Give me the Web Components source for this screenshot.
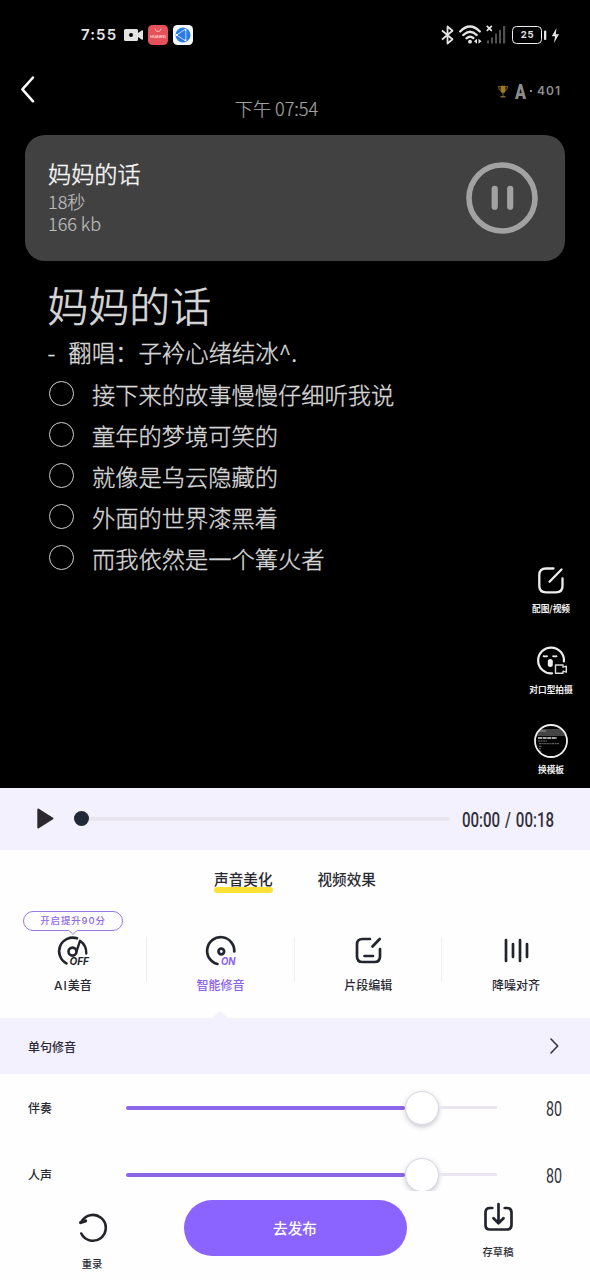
<!DOCTYPE html>
<html lang="zh-CN">
<head>
<meta charset="utf-8">
<title>妈妈的话</title>
<style>
  html, body { margin: 0; padding: 0; background: #fefefe; }
  body { width: 590px; height: 1280px; overflow: hidden; font-family: "Noto Sans CJK SC", "Noto Sans", sans-serif; }
</style>
</head>
<body>
<song-editor></song-editor>
<script>
const define = (name, css, html) => {
  const t = document.createElement('template');
  t.innerHTML = `<style>*{box-sizing:border-box} svg{display:block;flex:none;overflow:visible}${css}</style>${html}`;
  customElements.define(name, class extends HTMLElement {
    constructor() {
      super();
      this.attachShadow({ mode: 'open' }).appendChild(t.content.cloneNode(true));
    }
  });
};

/* condensed numerals: the text is squeezed to the given width */
customElements.define('narrow-text', class extends HTMLElement {
  connectedCallback() {
    const w = this.getAttribute('w'), h = this.getAttribute('h'), s = this.getAttribute('size');
    const wt = this.getAttribute('weight') || 500;
    this.attachShadow({ mode: 'open' }).innerHTML =
      `<style>:host{display:block;flex:none;width:${w}px;height:${h}px}svg{display:block;overflow:visible}
       text{font-family:Roboto,"Liberation Sans",sans-serif;font-size:${s}px;font-weight:${wt};fill:currentColor;word-spacing:1.5px}</style>
       <svg width="${w}" height="${h}"><text x="0" y="${h}" textLength="${w}" lengthAdjust="spacingAndGlyphs">${this.getAttribute('text')}</text></svg>`;
  }
});

define('status-bar', `
  :host{display:flex;align-items:center;height:69px;padding:0 30px 0 81px;color:#e4e4e4}
  .time{font:600 15px/20px Inter,sans-serif;letter-spacing:1.1px;width:43px}
  .cam{margin-right:5px}.red{margin-right:5px}
  .sp{flex:1}
  .bat{width:30px;height:18px;border:1.6px solid #eee;border-radius:4.5px;font:700 9.5px/15px Inter,sans-serif;letter-spacing:.7px;text-align:center;padding-left:1px}
`, `
  <span class="time">7:55</span>
  <svg class="cam" width="19" height="12" viewBox="0 0 19 12"><path fill="#e4e4e4" fill-rule="evenodd" d="M1.5 0h11a1.5 1.5 0 0 1 1.5 1.5V4l3.600-2.600Q19 .8 19 2v8q0 1.200-1.400.6L14 8v2.500a1.500 1.500 0 0 1-1.500 1.500h-11A1.500 1.500 0 0 1 0 10.500v-9A1.500 1.500 0 0 1 1.500 0zM7 4a2 2 0 1 0 0 4a2 2 0 0 0 0-4z"/></svg>
  <svg class="red" width="20" height="20" viewBox="0 0 20 20"><rect width="20" height="20" rx="4.500" fill="#e6525a"/><path d="M7 3.500q.3 3 3 3t3-3" fill="none" stroke="#ffb8b4" stroke-width="1"/><text x="2.300" y="13" textLength="15.500" lengthAdjust="spacingAndGlyphs" font-family="Inter,sans-serif" font-size="4" font-weight="700" fill="#ffd4d0">HUAWEI</text></svg>
  <svg width="20" height="20" viewBox="0 0 20 20"><rect width="20" height="20" rx="4.500" fill="#f5f9ff"/><circle cx="10" cy="10" r="7.500" fill="#2d7ae6"/><path d="M3.500 10L11.800 4.500M3.500 10L12 15.500M12.800 5v9.500" fill="none" stroke="#dcecff" stroke-width=".8"/><circle cx="12.500" cy="4.800" r="1" fill="#fff"/><circle cx="12.500" cy="15.200" r="1" fill="#fff"/><circle cx="3.800" cy="10" r="1" fill="#fff"/></svg>
  <span class="sp"></span>
  <svg width="13" height="20" viewBox="0 0 13 20" style="margin-right:5px"><path d="M1 5.500L11.500 14.200L6.500 18.500V1.500L11.500 5.800L1 14.500" fill="none" stroke="#e4e4e4" stroke-width="1.800" stroke-linejoin="round"/></svg>
  <svg width="23" height="19" viewBox="0 0 23 19" style="margin-right:4px"><g fill="none" stroke="#e4e4e4" stroke-width="2.400" stroke-linecap="round"><path d="M1.200 6.500Q11 -3.500 20.800 6.500"/><path d="M4.300 10Q11 3.500 17.700 10"/><path d="M7.500 13.300Q11 10.300 14.300 13"/></g><circle cx="11" cy="16.700" r="1.900" fill="#e4e4e4"/><path d="M15 16.300l3-2.500v5zM22.500 16.300l-3-2.500v5z" fill="#e4e4e4"/></svg>
  <svg width="20" height="19" viewBox="0 0 20 19" style="margin-right:6px"><path d="M.8 .8l5 5M5.800 .8l-5 5" stroke="#e4e4e4" stroke-width="1.700"/><g fill="#505050"><rect x="1" y="15.500" width="2" height="3"/><rect x="5" y="12.500" width="2" height="6"/><rect x="9" y="8.500" width="2" height="10"/><rect x="13" y="5" width="2" height="13.500"/><rect x="17" y="1" width="2.200" height="17.500"/></g></svg>
  <span class="bat">25</span>
  <svg width="18" height="18" viewBox="0 0 18 18"><rect x="2" y="4.500" width="2.300" height="9.500" rx="1" fill="#e4e4e4"/><path d="M14.500 2L9.800 10.300H13L12 17L17 8.300H13.800z" fill="#e4e4e4"/></svg>
`);

define('top-nav', `
  :host{display:flex;align-items:flex-start;height:66px;padding:0 28px 0 21px}
  .date{width:260px;margin-left:111.500px;text-align:center;font-weight:300;-webkit-text-stroke:.2px;font-size:18.100px;line-height:26px;padding-top:26px;color:#a2a2a2}
  .back{margin-top:7px}
  .rank{display:flex;align-items:center;height:18px;margin:13px 0 0 auto;color:#8d8d8d;font:600 12px/18px Inter,sans-serif}
  .num{letter-spacing:1.1px;margin-left:3px;width:25px}
  .dot{width:2px;height:2px;background:#8d8d8d;margin:0 2px 0 4px}
`, `
  <svg class="back" width="14" height="27" viewBox="0 0 14 27"><path d="M12 1.500L1.400 13.300L12 25.300" fill="none" stroke="#fff" stroke-width="2.500" stroke-linecap="round" stroke-linejoin="round"/></svg>
  <span class="date">下午 07:54</span>
  <span class="rank">
    <svg width="10" height="13" viewBox="0 0 10 13"><path d="M2.500 .8h5v4.500q0 2.700-2.500 2.700t-2.500-2.700z" fill="#a07822"/><path d="M2.300 1.500H.5q0 4 2.500 4.200M7.700 1.500h1.800q0 4-2.500 4.200M5 8v3" fill="none" stroke="#80601d" stroke-width="1"/><path d="M2.500 11h5v1.500h-5z" fill="#7e6430"/></svg>
    <narrow-text w="11" h="15" size="21" weight="900" text="A" style="margin-left:7px;margin-bottom:-1px"></narrow-text>
    <span class="dot"></span><span class="num">401</span>
  </span>
`);

define('audio-card', `
  :host{display:flex;align-items:center;justify-content:space-between;height:126px;margin:0 25px 0 25px;padding:0 27px 0 23px;border-radius:20px;background:#414141;color:#bdbdbd;font-weight:300}
  div{padding-bottom:3px}
  h2{font-size:23.2px;line-height:28px;font-weight:300;-webkit-text-stroke:.45px;color:#f5f5f5;margin:0 0 3px}
  p{font-size:18px;line-height:22px;margin:0;white-space:pre-line;-webkit-text-stroke:.2px}
`, `
  <div><h2><slot name="title"></slot></h2><p><slot name="meta"></slot></p></div>
  <svg width="72" height="72" viewBox="0 0 72 72"><circle cx="36" cy="36" r="33" fill="none" stroke="#a2a2a2" stroke-width="5.600"/><path d="M28.700 26.800v17.900M44.200 26.800v17.900" stroke="#a2a2a2" stroke-width="6.200" stroke-linecap="round"/></svg>
`);

define('check-line', `
  :host{display:flex;height:41px;align-items:center;color:#d6d6d6;font-size:23.25px;font-weight:300;line-height:39px;white-space:nowrap}
  i{width:25px;height:25px;border:1.400px solid #cfcfcf;border-radius:50%;margin:0 18.500px 5px 1px}
  span{height:41px}
`, `<i></i><span><slot></slot></span>`);

define('note-body', `
  :host{display:block;padding:16px 48px 0 47.500px;color:#d8d8d8;font-weight:300;-webkit-text-stroke:.35px}
  h1{font-size:40.9px;line-height:56px;font-weight:300;margin:0;-webkit-text-stroke:.6px}
  .sub{font-size:23.400px;line-height:38px;height:42px;white-space:pre}
  .sub span{margin-left:13px}
`, `
  <h1>妈妈的话</h1>
  <div class="sub">-<span>翻唱：子衿心绪结冰^.</span></div>
  <check-line>接下来的故事慢慢仔细听我说</check-line>
  <check-line>童年的梦境可笑的</check-line>
  <check-line>就像是乌云隐藏的</check-line>
  <check-line>外面的世界漆黑着</check-line>
  <check-line>而我依然是一个篝火者</check-line>
`);

define('rail-item', `
  :host{display:flex;flex-direction:column;align-items:center;height:80.5px;color:#f0f0f0}
  .ic{height:36px;display:flex;align-items:center}
  .lb{font-size:8.700px;font-weight:700;line-height:14px;margin-top:4px;white-space:nowrap}
`, `<div class="ic"><slot name="icon"></slot></div><div class="lb"><slot></slot></div>`);

define('side-rail', `
  :host{position:absolute;right:9px;top:562px;width:60px;display:block}
`, `
  <rail-item><svg slot="icon" width="26" height="27" viewBox="0 0 26 27"><path d="M15.500 1.500H8Q1.300 1.500 1.300 8v11q0 6.300 6.700 6.300h10q6.500 0 6.500-6.300V11.500M11.500 14.800L23.500 2.500" fill="none" stroke="#eee" stroke-width="2.300" stroke-linecap="round"/></svg>配图/视频</rail-item>
  <rail-item><svg slot="icon" width="28" height="29" viewBox="0 0 28 29"><path d="M15 27.300A12.900 12.900 0 1 1 26.900 15.500" fill="none" stroke="#eee" stroke-width="2.200" stroke-linecap="round"/><path d="M6 9.700q2.300 1.500 4.600 0M15.500 9.700q2.300 1.500 4.600 0" fill="none" stroke="#eee" stroke-width="1.800"/><rect x="10.800" y="13" width="5" height="8" rx="2.500" fill="#eee"/><path d="M18.500 19h7.500v2.200l3.300-1v6l-3.300-1v2H18.500z" fill="#000" stroke="#ddd" stroke-width="1.400" stroke-linejoin="round"/></svg>对口型拍摄</rail-item>
  <rail-item><svg slot="icon" width="34" height="34" viewBox="0 0 34 34"><defs><clipPath id="c"><circle cx="17" cy="17" r="15.500"/></clipPath></defs><g clip-path="url(#c)"><path d="M0 5h34v7H0z" fill="#444"/><path d="M4 7h8" stroke="#999"/><path d="M4 14h19" stroke="#ddd" stroke-width="1.600" stroke-dasharray="4 .6"/><path d="M4 17h9M5 19.700h20M5 22.300h3M5 24.800h2M5 27.300h3" stroke="#777" stroke-width="1" stroke-dasharray="2 .6"/></g><circle cx="17" cy="17" r="16" fill="none" stroke="#eee" stroke-width="1.800"/></svg>换模板</rail-item>
`);

define('note-screen', `
  :host{display:block;position:relative;height:788px;background:#000;overflow:hidden}
`, `
  <status-bar></status-bar><top-nav></top-nav>
  <audio-card><span slot="title">妈妈的话</span><span slot="meta">18秒
166 kb</span></audio-card>
  <note-body></note-body>
  <side-rail></side-rail>
`);

define('player-bar', `
  :host{display:flex;align-items:center;height:61.500px;padding:0 36px 0 37px;background:#f4f1fe;color:#30303a}
  .tr{flex:1;display:flex;align-items:center;margin:0 12px 0 20px}
  .dot{width:15px;height:15px;border-radius:50%;background:#202938}
  .ln{flex:1;height:3.500px;background:#e8e5f1;border-radius:0 2px 2px 0}
`, `
  <svg width="17" height="21" viewBox="0 0 17 21"><path d="M1.300 1.500L15.500 10.500L1.300 19.500z" fill="#2d2930" stroke="#2d2930" stroke-width="2" stroke-linejoin="round"/></svg>
  <div class="tr"><span class="dot"></span><span class="ln"></span></div>
  <narrow-text w="92" h="14" size="19.300" text="00:00 / 00:18" style="margin-top:3px"></narrow-text>
`);

define('tab-row', `
  :host{display:flex;justify-content:center;gap:45px;height:59.500px;padding-top:18px;font-size:14.600px;font-weight:500;line-height:22px;color:#292933}
  span{height:24px;white-space:nowrap;position:relative;z-index:0}
  .on::after{content:"";position:absolute;z-index:-1;left:0;right:0;top:19px;height:6px;border-radius:3px;background:#fce137}
`, `<span class="on">声音美化</span><span>视频效果</span>`);

define('tool-item', `
  :host{display:flex;flex-direction:column;align-items:center;flex:1;position:relative;color:#292933;font-size:12px;font-weight:500;line-height:18px;padding-top:26px}
  :host([active]){color:#8a62ee}
  :host(:not(:last-child))::after{content:"";position:absolute;right:0;top:28px;width:1px;height:45px;background:#f0edf7}
  :host([active])::before{content:"";position:absolute;left:50%;bottom:0;margin-left:-8.500px;border:8.500px solid transparent;border-bottom:7.500px solid #f4f1fe;border-top:0}
  .ic{height:31px;display:flex;align-items:center;margin-bottom:10px}
`, `<div class="ic"><slot name="icon"></slot></div><div><slot></slot></div><slot name="tip"></slot>`);

define('tip-bubble', `
  :host{position:absolute;left:24px;top:2px;width:100px;height:20px;border:1px solid #9a79e6;border-radius:11px;background:#fefefe;color:#8f6ce8;font-family:Inter,"Noto Sans CJK SC",sans-serif;font-size:9.500px;font-weight:500;line-height:18px;letter-spacing:.850px;text-align:center;white-space:nowrap}
  svg{position:absolute;left:44px;top:18px}
`, `<slot></slot><svg width="10" height="6" viewBox="0 0 10 6"><path d="M.5 -.5h9V.3L5 4.500L.5 .3z" fill="#fefefe"/><path d="M1 .5L5 4.500L9 .5" fill="none" stroke="#9a79e6"/></svg>`);

define('tool-row', `:host{display:flex;height:109px;margin-left:-1px}
  .it{font:italic 700 10.500px Inter,sans-serif}
  .la{font-family:Inter,sans-serif;letter-spacing:.9px}`, `
  <tool-item><svg slot="icon" width="30" height="30" viewBox="0 0 30 30"><g fill="none" stroke="#22252d" stroke-width="2.600" stroke-linecap="round" stroke-linejoin="round"><path d="M8.500 27.300A13.600 13.600 0 0 1 19 2.300"/><circle cx="14.500" cy="15.600" r="4"/><path d="M18.500 15.500L22 4.800Q28.600 9.500 28.300 17.500" stroke-width="2.400"/></g><text class="it" x="11.500" y="29" textLength="19.500" lengthAdjust="spacingAndGlyphs" fill="#22252d">OFF</text></svg><span class="la">AI</span>美音<tip-bubble slot="tip">开启提升90分</tip-bubble></tool-item>
  <tool-item active><svg slot="icon" width="30" height="30" viewBox="0 0 30 30"><g fill="none" stroke="#22252d" stroke-width="2.700" stroke-linecap="round"><path d="M11.500 28A13.600 13.600 0 1 1 28.300 15.500"/><circle cx="15.300" cy="15.500" r="2.800"/></g><text class="it" x="15" y="29" textLength="14.500" lengthAdjust="spacingAndGlyphs" fill="#8a62ee">ON</text></svg>智能修音</tool-item>
  <tool-item><svg slot="icon" width="27" height="27" viewBox="0 0 27 27"><path d="M15 2H7.500Q2 2 2 7.500v12Q2 25 7.500 25h12q5.500 0 5.500-5.500V12M17.500 9.500L24.700 2M9.500 19h8.500" fill="none" stroke="#22252d" stroke-width="2.700" stroke-linecap="round"/></svg>片段编辑</tool-item>
  <tool-item><svg slot="icon" width="25" height="25" viewBox="0 0 25 25"><path d="M2 2v21M9 6v13M16 2v21M23 6v13" stroke="#22252d" stroke-width="2.700" stroke-linecap="round"/></svg>降噪对齐</tool-item>
`);

define('link-row', `
  :host{display:flex;align-items:center;justify-content:space-between;height:56px;padding:0 31px 0 28px;background:#f4f1fe;color:#292933;font-size:12px;font-weight:500}
`, `<span><slot></slot></span><svg width="9" height="16" viewBox="0 0 9 16"><path d="M1 1L7.700 8L1 15" fill="none" stroke="#35353f" stroke-width="1.600" stroke-linecap="round" stroke-linejoin="round"/></svg>`);

define('volume-row', `
  :host{display:flex;align-items:center;height:67px;padding:0 28px;color:#292933;font-size:12px;font-weight:500}
  .lb{width:98px}
  .tr{width:371px;display:flex;align-items:center}
  .a{width:279px;height:4px;border-radius:2px;background:#8b66e6}
  .k{width:34px;height:34px;border-radius:50%;background:#fff;border:1px solid #dad7e2;box-shadow:0 2px 5px rgba(50,40,70,.25)}
  .b{flex:1;height:2.500px;background:#e9e5f1}
  narrow-text{margin:2px 0 0 auto;color:#33333d}
`, `<span class="lb"><slot></slot></span><div class="tr"><span class="a"></span><span class="k"></span><span class="b"></span></div><narrow-text w="16" h="14" size="19.300" weight="400" text="80"></narrow-text>`);

define('volume-panel', `:host{display:block;height:117px;overflow:hidden}`,
  `<volume-row>伴奏</volume-row><volume-row>人声</volume-row>`);

define('bottom-bar', `
  :host{display:flex;height:89px;padding-left:61px;color:#292933;font-size:10.300px;font-weight:500;line-height:16px}
  .s{width:62px;display:flex;flex-direction:column;align-items:center;white-space:nowrap}
  button{font:500 14.600px/55px "Noto Sans CJK SC",sans-serif;color:#fff;width:223px;height:55.500px;border:0;border-radius:28px;background:#8b63ff;padding:0;margin:9px 60.500px 0}
`, `
  <div class="s" style="padding-top:22px"><svg width="28" height="30" viewBox="0 0 28 30" style="margin-left:2px"><path d="M2.300 9.200A12.900 12.900 0 1 1 2.300 20.500" fill="none" stroke="#26242a" stroke-width="2.600" stroke-linecap="round"/><path d="M1.600 9.500L6.600 8" fill="none" stroke="#26242a" stroke-width="3.200" stroke-linecap="round"/></svg><span style="margin-top:12.500px">重录</span></div>
  <button>去发布</button>
  <div class="s" style="padding-top:10.500px"><svg width="29" height="29" viewBox="0 0 29 29"><path d="M8.300 6H6Q1.500 6 1.500 10.500V23q0 4.500 4.500 4.500h17q4.500 0 4.500-4.500V10.500Q27.500 6 23 6h-2.300M14.500 2V19M9.500 16.300L14.500 21.300L19.500 16.300" fill="none" stroke="#22252d" stroke-width="2.700" stroke-linecap="round" stroke-linejoin="round"/></svg><span style="margin-top:13.500px">存草稿</span></div>
`);

define('song-editor', `:host{display:block;width:590px;height:1280px;background:#fefefe;overflow:hidden}`, `
  <note-screen></note-screen>
  <player-bar></player-bar>
  <tab-row></tab-row>
  <tool-row></tool-row>
  <link-row>单句修音</link-row>
  <volume-panel></volume-panel>
  <bottom-bar></bottom-bar>
`);
</script>
</body>
</html>
